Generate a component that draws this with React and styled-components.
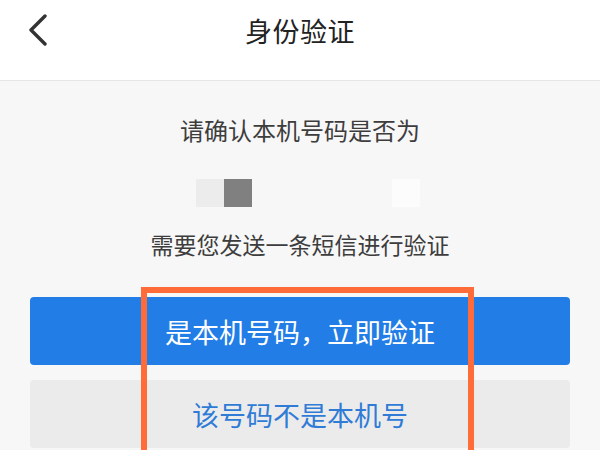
import React from 'react';
import styled, { createGlobalStyle } from 'styled-components';

const GlobalStyle = createGlobalStyle`
  body {
    margin: 0;
    background: #f7f7f7;
    font-family: "Noto Sans CJK SC", "Noto Sans", sans-serif;
  }
`;

function BackIcon() {
  return (
    <svg width="20" height="32" viewBox="0 0 20 32">
      <polyline
        points="17,2 3,16 17,30"
        fill="none"
        stroke="#333"
        strokeWidth="3.4"
        strokeLinecap="round"
        strokeLinejoin="round"
      />
    </svg>
  );
}

function App() {
  return (
    <Page>
      <GlobalStyle />
      <Header>
        <BackButton>
          <BackIcon />
        </BackButton>
        <Title>身份验证</Title>
        <span />
      </Header>
      <Content>
        <Prompt>请确认本机号码是否为</Prompt>
        <PhoneMask>
          <MaskBlock $w={28} $color="#ececec" />
          <MaskBlock $w={28} $color="#808080" />
          <MaskBlock $w={140} $color="transparent" />
          <MaskBlock $w={28} $color="#fcfcfc" />
        </PhoneMask>
        <Hint>需要您发送一条短信进行验证</Hint>
        <Button $primary>是本机号码，立即验证</Button>
        <Button>该号码不是本机号</Button>
      </Content>
      <Highlight />
    </Page>
  );
}

const Page = styled.div`
  position: relative;
  width: 600px;
  height: 450px;
  overflow: hidden;
  background: #f7f7f7;
`;

const Header = styled.div`
  display: grid;
  grid-template-columns: 1fr auto 1fr;
  align-items: center;
  height: 60px;
  padding-bottom: 20px;
  background: #fff;
  border-bottom: 1px solid #e6e6e6;
`;

const BackButton = styled.div`
  display: flex;
  align-items: center;
  padding-left: 28px;
`;

const Title = styled.div`
  font-size: 27px;
  color: #222;
  letter-spacing: 0.5px;
`;

const Content = styled.div`
  display: flex;
  flex-direction: column;
  align-items: center;
  padding: 0 30px;
`;

const Prompt = styled.div`
  margin-top: 31px;
  font-size: 24px;
  line-height: 36px;
  color: #3d3d3d;
`;

const PhoneMask = styled.div`
  display: flex;
  margin-top: 31px;
  margin-left: 16px;
  height: 28px;
`;

const MaskBlock = styled.div`
  width: ${(p) => p.$w}px;
  height: 28px;
  background: ${(p) => p.$color};
`;

const Hint = styled.div`
  margin-top: 19px;
  font-size: 23px;
  line-height: 36px;
  color: #3d3d3d;
`;

const Button = styled.div`
  display: flex;
  align-items: center;
  justify-content: center;
  box-sizing: border-box;
  width: 540px;
  height: 68px;
  margin-top: ${(p) => (p.$primary ? '35px' : '15px')};
  border-radius: 4px;
  font-size: 27px;
  background: ${(p) => (p.$primary ? '#237de6' : '#ebebec')};
  color: ${(p) => (p.$primary ? '#fff' : '#2f7bd6')};
`;

const Highlight = styled.div`
  position: absolute;
  left: 141px;
  top: 287px;
  width: 333px;
  height: 200px;
  box-sizing: border-box;
  border: 6px solid #ff6c3a;
`;

export default App;
